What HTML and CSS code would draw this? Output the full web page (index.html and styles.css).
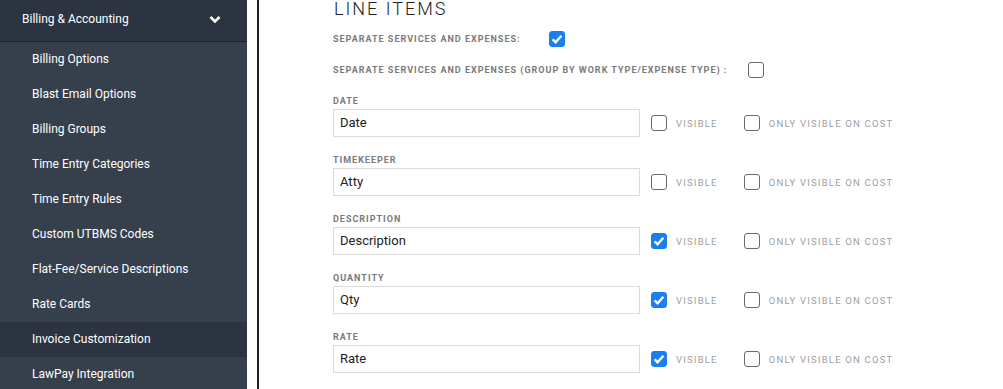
FILE: index.html
```html
<!DOCTYPE html>
<html lang="en">

<head>
    <meta charset="UTF-8">
    <meta name="viewport" content="width=device-width, initial-scale=1.0">
    <title>Invoice Customization</title>
    <link rel="stylesheet" href="styles.css">
</head>

<body>
    <div class="page">
        <div class="sidebar">
            <div class="menu-head">
                <span>Billing &amp; Accounting</span>
                <svg class="chevron" width="12" height="9" viewBox="0 0 12 9">
                    <path d="M1.5 2 L6 6.5 L10.5 2" fill="none" stroke="#fff" stroke-width="2.6" />
                </svg>
            </div>
            <div class="menu-item">Billing Options</div>
            <div class="menu-item">Blast Email Options</div>
            <div class="menu-item">Billing Groups</div>
            <div class="menu-item">Time Entry Categories</div>
            <div class="menu-item">Time Entry Rules</div>
            <div class="menu-item">Custom UTBMS Codes</div>
            <div class="menu-item">Flat-Fee/Service Descriptions</div>
            <div class="menu-item">Rate Cards</div>
            <div class="menu-item active">Invoice Customization</div>
            <div class="menu-item">LawPay Integration</div>
        </div>

        <div class="main">
            <h2 class="section-title">LINE ITEMS</h2>

            <div class="option">
                <span class="label">Separate services and expenses:</span>
                <span class="check on"></span>
            </div>
            <div class="option second">
                <span class="label">Separate services and expenses (group by work type/expense type) :</span>
                <span class="check"></span>
            </div>

            <div class="field">
                <div class="label">Date</div>
                <div class="field-row">
                    <div class="input">Date</div>
                    <span class="check"></span><span class="small">Visible</span>
                    <span class="check"></span><span class="small">Only visible on cost</span>
                </div>
            </div>
            <div class="field">
                <div class="label">Timekeeper</div>
                <div class="field-row">
                    <div class="input">Atty</div>
                    <span class="check"></span><span class="small">Visible</span>
                    <span class="check"></span><span class="small">Only visible on cost</span>
                </div>
            </div>
            <div class="field">
                <div class="label">Description</div>
                <div class="field-row">
                    <div class="input">Description</div>
                    <span class="check on"></span><span class="small">Visible</span>
                    <span class="check"></span><span class="small">Only visible on cost</span>
                </div>
            </div>
            <div class="field">
                <div class="label">Quantity</div>
                <div class="field-row">
                    <div class="input">Qty</div>
                    <span class="check on"></span><span class="small">Visible</span>
                    <span class="check"></span><span class="small">Only visible on cost</span>
                </div>
            </div>
            <div class="field">
                <div class="label">Rate</div>
                <div class="field-row">
                    <div class="input">Rate</div>
                    <span class="check on"></span><span class="small">Visible</span>
                    <span class="check"></span><span class="small">Only visible on cost</span>
                </div>
            </div>
        </div>
    </div>
</body>

</html>
```

FILE: styles.css
```css
* {
    box-sizing: border-box;
}

body {
    margin: 0;
    font-family: Roboto, "Liberation Sans", sans-serif;
    background: #fff;
    overflow: hidden;
}

.page {
    display: flex;
    height: 389px;
}

.sidebar {
    width: 247px;
    background-color: #36404d;
    color: #fff;
    font-size: 12px;
    flex-shrink: 0;
}

.menu-head {
    height: 42px;
    background-color: #2b3440;
    border-bottom: 1px solid #1e252d;
    display: flex;
    align-items: center;
    justify-content: space-between;
    padding: 0 26px 0 22px;
}

.menu-head span {
    margin-top: -3px;
}

.chevron {
    margin-top: -2px;
}

.menu-item {
    height: 35px;
    line-height: 35px;
    padding-left: 32px;
}

.menu-item.active {
    background-color: #2b3440;
}

.main {
    margin-left: 10px;
    border-left: 2px solid #222;
    padding-left: 74px;
    flex: 1;
    color: #333;
}

.section-title {
    margin: -2px 0 0 1px;
    font-size: 18px;
    font-weight: 300;
    letter-spacing: 2px;
    line-height: 22px;
    color: #222;
}

.label {
    font-size: 9px;
    font-weight: bold;
    letter-spacing: 1px;
    text-transform: uppercase;
    color: #7a7a7a;
}

.option {
    display: flex;
    align-items: center;
    gap: 28px;
    margin-top: 11px;
    height: 16px;
}

.option.second {
    margin-top: 15px;
    gap: 21px;
}

.check {
    width: 16px;
    height: 16px;
    border: 1px solid #6a6a6a;
    border-radius: 3px;
    flex-shrink: 0;
    background-color: #fff;
}

.check.on {
    border-color: #1a7ff0;
    background-color: #1a7ff0;
    background-image: url("data:image/svg+xml;utf8,<svg xmlns='http://www.w3.org/2000/svg' viewBox='0 0 16 16'><path d='M3.6 8.3 L6.6 11.2 L12.4 4.8' fill='none' stroke='white' stroke-width='2.4'/></svg>");
    background-size: 16px 16px;
    background-position: -1px -1px;
}

.field {
    margin-top: 17px;
}

.field .label {
    line-height: 12px;
    margin-bottom: 2px;
}

.field-row {
    display: flex;
    align-items: center;
}

.input {
    width: 307px;
    height: 28px;
    border: 1px solid #dcdcdc;
    font-size: 13px;
    color: #222;
    padding-left: 6px;
    line-height: 26px;
    margin-right: 11px;
}

.small {
    font-size: 9.5px;
    letter-spacing: 1.2px;
    text-transform: uppercase;
    color: #a0a0a0;
    margin-left: 9px;
    margin-right: 26px;
}
```
